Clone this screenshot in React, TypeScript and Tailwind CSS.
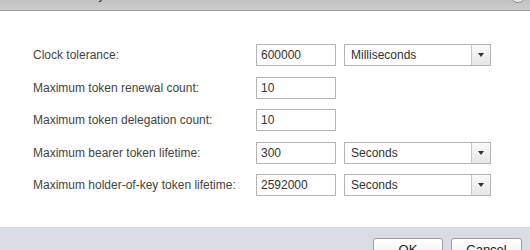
const ROWS: { label: string; value: string; unit?: string }[] = [
  { label: "Clock tolerance:", value: "600000", unit: "Milliseconds" },
  { label: "Maximum token renewal count:", value: "10" },
  { label: "Maximum token delegation count:", value: "10" },
  { label: "Maximum bearer token lifetime:", value: "300", unit: "Seconds" },
  { label: "Maximum holder-of-key token lifetime:", value: "2592000", unit: "Seconds" },
];

function UnitSelect({ unit }: { unit: string }) {
  return (
    <div className="ml-[8px] flex h-[22px] w-[147px] border border-[#b4b4b4] bg-white">
      <div className="flex flex-1 items-center pl-[6px] text-[12px] text-[#333]">{unit}</div>
      <div className="flex w-[19px] items-center justify-center border-l border-[#c8c8c8] bg-gradient-to-b from-[#fafafa] to-[#e6e6e6]">
        <span className="block h-0 w-0 border-x-[3px] border-t-[4px] border-x-transparent border-t-[#333]" />
      </div>
    </div>
  );
}

export default function App() {
  return (
    <div className="flex h-[250px] w-[530px] flex-col overflow-hidden bg-white font-['Liberation_Sans',Arial,sans-serif]">
      {/* Title bar, mostly scrolled out of view */}
      <div className="relative h-[11px] shrink-0 overflow-hidden border-b border-[#9c9c9c] bg-gradient-to-b from-[#c2c2c2] to-[#cdcdcd]">
        <div className="mt-[-13px] pl-[6px] text-[13px] leading-[16px] text-[#333]">Edit Token Policy</div>
        <span className="absolute right-[4px] top-[-13px] h-[16px] w-[16px] rounded-full border border-[#8f8f8f] bg-[#e9e9e9]" />
      </div>

      {/* Form */}
      <div className="flex flex-1 flex-col pl-[33px] pt-[33px]">
        {ROWS.map((row) => (
          <div key={row.label} className="mb-[10.5px] flex h-[22px] items-center">
            <div className="w-[223px] text-[12px] text-[#444]">{row.label}</div>
            <div className="flex h-[22px] w-[80px] items-center border border-[#b4b4b4] pl-[4px] text-[12px] text-[#333]">
              {row.value}
            </div>
            {row.unit && <UnitSelect unit={row.unit} />}
          </div>
        ))}
      </div>

      {/* Footer */}
      <div className="flex h-[23px] shrink-0 justify-end gap-[8px] overflow-hidden border-t border-[#d3d7dc] bg-[#d9dde3] pr-[8px] pt-[10px]">
        <button className="h-[24px] w-[70px] rounded-[3px] border border-[#9e9e9e] bg-gradient-to-b from-white to-[#ececec] text-[13px] leading-[20px] text-[#222]">
          OK
        </button>
        <button className="h-[24px] w-[71px] rounded-[3px] border border-[#9e9e9e] bg-gradient-to-b from-white to-[#ececec] text-[13px] leading-[20px] text-[#222]">
          Cancel
        </button>
      </div>
    </div>
  );
}
